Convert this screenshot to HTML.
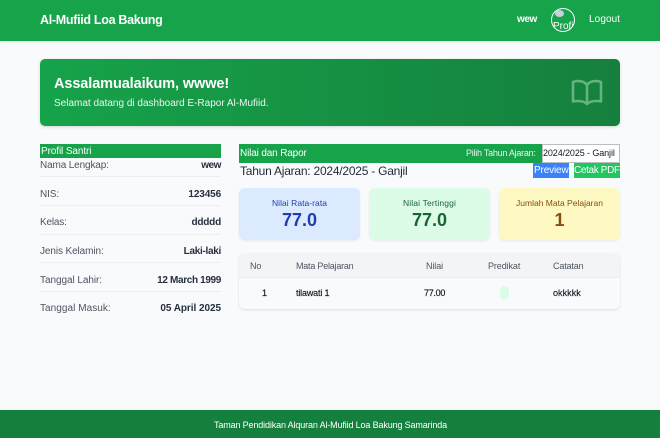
<!DOCTYPE html>
<html lang="id"><head><meta charset="utf-8"><title>Dashboard</title>
<style>
*{box-sizing:border-box;margin:0;padding:0}
html,body{width:660px;height:438px;overflow:hidden;background:#f9fafb;font-family:"Liberation Sans",sans-serif;color:#1f2937}
.t{position:absolute;white-space:nowrap;line-height:1}
.b{position:absolute}
.c{text-align:center}
.lab{font-size:10px;color:#4b5563;left:40px}
.val{font-size:10px;font-weight:bold;color:#27303f;right:439px}
.hr{position:absolute;left:40px;width:181px;height:1px;background:#eceef1}
.th{font-size:9px;color:#4b5563;letter-spacing:-.1px}
.td{font-size:9px;color:#111827;-webkit-text-stroke:.15px #111827}
.card{position:absolute;top:188px;height:52px;border-radius:6px;box-shadow:0 1px 2px rgba(0,0,0,.07)}
</style></head><body>
<div class="b" style="left:0;top:0;width:660px;height:41px;background:#16a34a;box-shadow:0 1px 3px rgba(0,0,0,.1)"></div>
<div class="t" style="left:40px;top:14px;font-size:12.500px;font-weight:bold;color:#fff;letter-spacing:-.3px">Al-Mufiid Loa Bakung</div>
<div class="t" style="left:517px;top:15px;font-size:10px;font-weight:bold;color:#fff;letter-spacing:-.4px">wew</div>
<div class="b" style="left:551px;top:8px;width:24px;height:24px;border-radius:50%;border:1px solid #fff;overflow:hidden">
<div class="b" style="left:3px;top:1px;width:9px;height:7px;background:#c7cfe0;border-radius:50%"></div>
<div class="t" style="left:1px;top:13px;font-size:10px;color:#fff">Profi</div></div>
<div class="t" style="left:589px;top:15px;font-size:10px;color:#fff;letter-spacing:.1px">Logout</div>

<div class="b" style="left:40px;top:59px;width:580px;height:67px;border-radius:5px;background:linear-gradient(90deg,#16a34a,#15803d);box-shadow:0 1px 3px rgba(0,0,0,.15)"></div>
<div class="t" style="left:54px;top:77px;font-size:14.500px;font-weight:bold;color:#fff;letter-spacing:-.1px">Assalamualaikum, wwwe!</div>
<div class="t" style="left:54px;top:99px;font-size:10px;color:#eaf8ef">Selamat datang di dashboard E-Rapor Al-Mufiid.</div>
<svg class="b" style="left:571px;top:79px" width="33" height="27" viewBox="0 0 33 27" fill="none" stroke="#64b382" stroke-width="2.600" stroke-linejoin="round" stroke-linecap="round"><path d="M16 6C14 3 10 2 7 2C5 2 3 2.500 2 3V22.500C3.500 22 5.500 22 7 22C10 22 14 23 16 25C18 23 22 22 25 22C26.500 22 28.500 22 30 22.500V3C29 2.500 27 2 25 2C22 2 18 3 16 6ZM16 6V25"/></svg>

<div class="b" style="left:40px;top:144px;width:181px;height:14px;background:#16a34a"></div>
<div class="t" style="left:41px;top:147px;font-size:10px;color:#fff;letter-spacing:-.1px">Profil Santri</div>
<div class="t lab" style="top:161px;letter-spacing:-.14px">Nama Lengkap:</div><div class="t val" style="top:161px;letter-spacing:-.45px">wew</div><div class="hr" style="top:176px"></div>
<div class="t lab" style="top:190px;letter-spacing:-.1px">NIS:</div><div class="t val" style="top:190px;letter-spacing:-.13px">123456</div><div class="hr" style="top:205px"></div>
<div class="t lab" style="top:218px;letter-spacing:-.18px">Kelas:</div><div class="t val" style="top:218px;letter-spacing:-.2px">ddddd</div><div class="hr" style="top:234px"></div>
<div class="t lab" style="top:247px;letter-spacing:-.1px">Jenis Kelamin:</div><div class="t val" style="top:247px;letter-spacing:-.3px">Laki-laki</div><div class="hr" style="top:262px"></div>
<div class="t lab" style="top:276px;letter-spacing:-.06px">Tanggal Lahir:</div><div class="t val" style="top:276px;letter-spacing:-.35px">12 March 1999</div><div class="hr" style="top:291px"></div>
<div class="t lab" style="top:304px;letter-spacing:.05px">Tanggal Masuk:</div><div class="t val" style="top:304px;letter-spacing:-.05px">05 April 2025</div>

<div class="b" style="left:239px;top:144px;width:381px;height:19px;background:#16a34a"></div>
<div class="t" style="left:240px;top:149px;font-size:10px;color:#fff;letter-spacing:-.15px">Nilai dan Rapor</div>
<div class="t" style="left:466px;top:149px;font-size:9px;color:#e6f6ec;letter-spacing:-.25px">Pilih Tahun Ajaran:</div>
<div class="b" style="left:542px;top:144px;width:78px;height:19px;background:#fff;border:1px solid #b9bdc4"></div>
<div class="t" style="left:543px;top:149px;font-size:9px;color:#111827;letter-spacing:-.1px">2024/2025 - Ganjil</div>
<div class="t" style="left:240px;top:165px;font-size:12px;color:#1f2937;letter-spacing:-.23px">Tahun Ajaran: 2024/2025 - Ganjil</div>
<div class="b" style="left:533px;top:163px;width:36px;height:15px;background:#3b82f6"></div>
<div class="t" style="left:534px;top:166px;font-size:10px;color:#fff;letter-spacing:-.15px">Preview</div>
<div class="b" style="left:574px;top:163px;width:46px;height:15px;background:#22c55e"></div>
<div class="t" style="left:574px;top:166px;font-size:10px;color:#fff;letter-spacing:-.35px">Cetak PDF</div>

<div class="card" style="left:239px;width:121px;background:#dbeafe"></div>
<div class="t c" style="left:239px;width:121px;top:199px;font-size:8.500px;color:#1e40af;letter-spacing:.05px">Nilai Rata-rata</div>
<div class="t c" style="left:239px;width:121px;top:211px;font-size:18px;font-weight:bold;color:#1e40af">77.0</div>
<div class="card" style="left:369px;width:121px;background:#dcfce7"></div>
<div class="t c" style="left:369px;width:121px;top:199px;font-size:8.500px;color:#166534;letter-spacing:.15px">Nilai Tertinggi</div>
<div class="t c" style="left:369px;width:121px;top:211px;font-size:18px;font-weight:bold;color:#166534">77.0</div>
<div class="card" style="left:499px;width:121px;background:#fef9c3"></div>
<div class="t c" style="left:499px;width:121px;top:199px;font-size:8.500px;color:#854d0e;letter-spacing:0">Jumlah Mata Pelajaran</div>
<div class="t c" style="left:499px;width:121px;top:211px;font-size:18px;font-weight:bold;color:#854d0e">1</div>

<div class="b" style="left:239px;top:253px;width:381px;height:56px;border-radius:6px;background:#f9fafb;box-shadow:0 1px 2px rgba(0,0,0,.12);overflow:hidden">
<div class="b" style="left:0;top:0;width:381px;height:25px;background:#f3f4f6;border-bottom:1px solid #eceef1"></div></div>
<div class="t th" style="left:250px;top:262px">No</div>
<div class="t th" style="left:296px;top:262px;letter-spacing:-.22px">Mata Pelajaran</div>
<div class="t th" style="left:426px;top:262px">Nilai</div>
<div class="t th" style="left:488px;top:262px">Predikat</div>
<div class="t th" style="left:553px;top:262px;letter-spacing:-.15px">Catatan</div>
<div class="t td" style="left:262px;top:289px">1</div>
<div class="t td" style="left:296px;top:289px;letter-spacing:-.17px">tilawati 1</div>
<div class="t td" style="left:424px;top:289px;letter-spacing:-.3px">77.00</div>
<div class="b" style="left:500px;top:286px;width:9px;height:14px;border-radius:5px;background:#dcfce7"></div>
<div class="t td" style="left:553px;top:289px;letter-spacing:.05px">okkkkk</div>

<div class="b" style="left:0;top:410px;width:660px;height:28px;background:#15803d"></div>
<div class="t" style="left:214px;top:421px;font-size:9px;color:#fff;letter-spacing:-.14px">Taman Pendidikan Alquran Al-Mufiid Loa Bakung Samarinda</div>
</body></html>
